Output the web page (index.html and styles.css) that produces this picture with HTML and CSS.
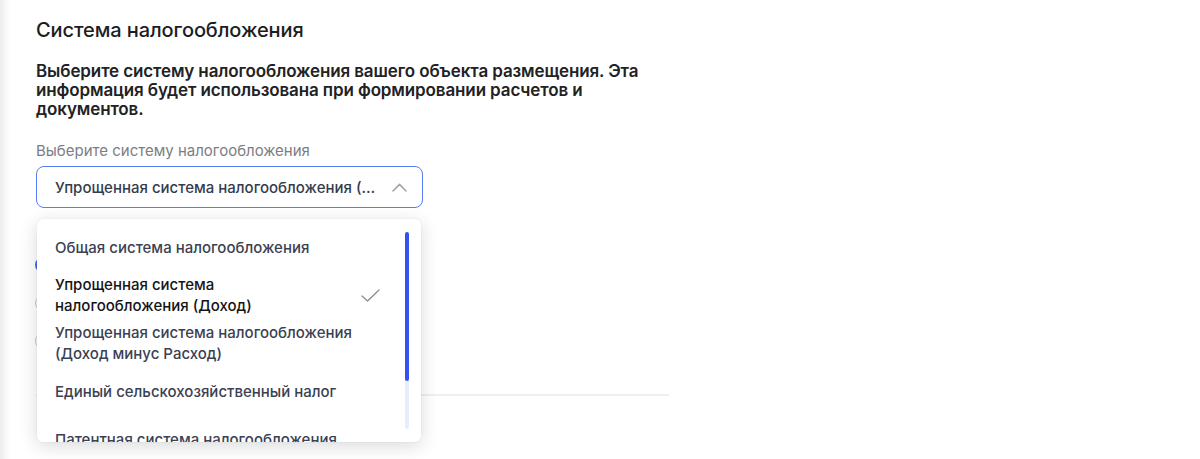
FILE: index.html
```html
<!DOCTYPE html>
<html lang="ru">
<head>
<meta charset="utf-8">
<title>Система налогообложения</title>
<link rel="stylesheet" href="styles.css">
</head>
<body>
<main class="page">
  <section class="tax">
    <h2 class="tax-title">Система налогообложения</h2>
    <p class="tax-desc">Выберите систему налогообложения вашего объекта размещения. Эта информация будет использована при формировании расчетов и документов.</p>

    <div class="field">
      <div class="field-label">Выберите систему налогообложения</div>
      <div class="select">
        <div class="select-control">
          <span class="select-value">Упрощенная система налогообложения (Доход)</span>
          <svg class="chevron" width="15" height="9" viewBox="0 0 15 9" aria-hidden="true"><path d="M1 8 L7.5 1.4 L14 8" fill="none" stroke="#a3a5ad" stroke-width="1.6" stroke-linecap="round" stroke-linejoin="round"/></svg>
        </div>
        <div class="select-menu">
          <ul class="menu-list">
            <li class="menu-item"><span class="menu-text">Общая система налогообложения</span></li>
            <li class="menu-item is-selected"><span class="menu-text">Упрощенная система налогообложения (Доход)</span>
              <svg class="check" width="19" height="13" viewBox="0 0 19 13" aria-hidden="true"><path d="M1 7 L6.5 12 L18 1" fill="none" stroke="#8b8c92" stroke-width="1.3" stroke-linecap="round" stroke-linejoin="round"/></svg>
            </li>
            <li class="menu-item"><span class="menu-text">Упрощенная система налогообложения (Доход минус Расход)</span></li>
            <li class="menu-item"><span class="menu-text">Единый сельскохозяйственный налог</span></li>
            <li class="menu-item"><span class="menu-text">Патентная система налогообложения</span></li>
          </ul>
          <div class="scrollbar"><div class="scrollbar-thumb"></div></div>
        </div>
      </div>
    </div>

    <div class="radios">
      <div class="radio-row"><span class="radio is-checked" aria-label="вариант 1"></span></div>
      <div class="radio-row"><span class="radio" aria-label="вариант 2"></span></div>
      <div class="radio-row"><span class="radio" aria-label="вариант 3"></span></div>
    </div>

    <div class="divider"></div>
  </section>
</main>
</body>
</html>
```

FILE: styles.css
```css
* { box-sizing: border-box; }

html, body {
  margin: 0;
  padding: 0;
}

body {
  width: 1200px;
  height: 459px;
  overflow: hidden;
  font-family: Inter, "Noto Sans", "Liberation Sans", sans-serif;
  background: linear-gradient(to right, #ececec 0, #f6f6f6 5px, #ffffff 11px);
  color: #1f1f1f;
}

.page {
  padding: 18px 0 0 36px;
}

.tax {
  width: 633px;
}

.tax-title {
  margin: 0;
  font-size: 20px;
  line-height: 24px;
  font-weight: 500;
  color: #1d1d1f;
  letter-spacing: -0.1px;
}

.tax-desc {
  margin: 20px 0 0;
  font-size: 17px;
  line-height: 19px;
  font-weight: 600;
  letter-spacing: -0.12px;
  color: #222224;
}

.field {
  margin-top: 23px;
}

.field-label {
  font-size: 15px;
  line-height: 18px;
  color: #7c7d84;
  font-weight: 400;
}

.select {
  position: relative;
  width: 387px;
  margin-top: 6px;
}

.select-control {
  height: 42px;
  border: 1px solid #5c7cf4;
  border-radius: 8px;
  display: flex;
  align-items: center;
  padding: 0 15px 0 18px;
  gap: 9px;
  background: #fff;
}

.select-value {
  flex: 1;
  min-width: 0;
  white-space: nowrap;
  overflow: hidden;
  text-overflow: ellipsis;
  font-size: 15px;
  font-weight: 500;
  color: #353c4e;
}

.chevron {
  flex: none;
}

.select-menu {
  position: absolute;
  left: 1px;
  top: 53px;
  width: 384px;
  height: 223px;
  background: #fff;
  border-radius: 6px;
  box-shadow: 0 4px 18px rgba(20, 24, 40, 0.16), 0 0 2px rgba(20, 24, 40, 0.08);
  overflow: hidden;
  z-index: 5;
}

.menu-list {
  list-style: none;
  margin: 0;
  padding: 4px 48px 0 18px;
}

.menu-item {
  min-height: 48px;
  display: flex;
  align-items: center;
  gap: 12px;
  font-size: 15px;
  line-height: 21px;
  font-weight: 500;
  color: #3a4153;
}

.menu-text {
  flex: 1;
}

.menu-item.is-selected {
  color: #141416;
}

.menu-item.is-selected .menu-text {
  padding-right: 10px;
}

.check {
  flex: none;
  margin-right: -7px;
}

.scrollbar {
  position: absolute;
  right: 12px;
  top: 13px;
  bottom: 13px;
  width: 4px;
  border-radius: 2px;
  background: #e9ecfc;
}

.scrollbar-thumb {
  height: 149px;
  border-radius: 2px;
  background: #3452ef;
}

.radios {
  margin-top: 38px;
  display: flex;
  flex-direction: column;
}

.radio-row {
  height: 38px;
  display: flex;
  align-items: center;
}

.radio {
  width: 16px;
  height: 16px;
  margin-left: -1px;
  border-radius: 50%;
  border: 1.5px solid #c9cad0;
  background: #fff;
}

.radio.is-checked {
  border: 5px solid #4a67f2;
}

.divider {
  margin-top: 34px;
  height: 2px;
  background: #efefef;
}
```
